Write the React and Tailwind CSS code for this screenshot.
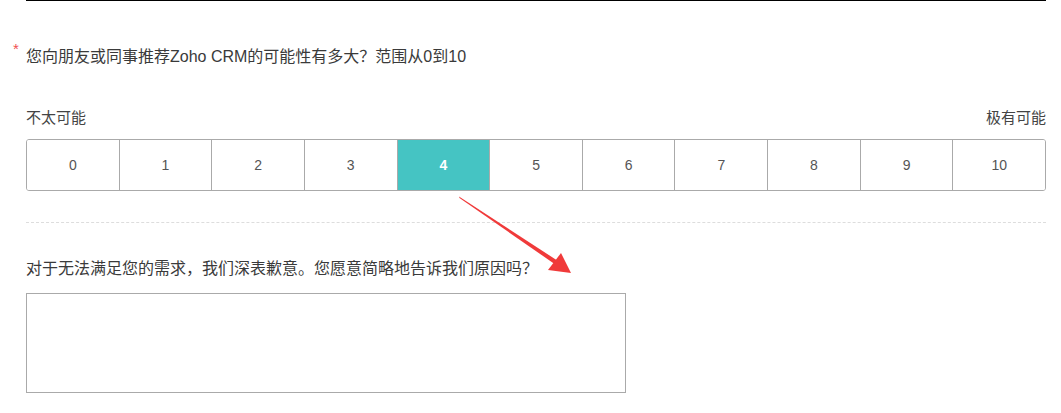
export default function App() {
  const nums = [0, 1, 2, 3, 4, 5, 6, 7, 8, 9, 10]
  const selected = 4
  const font = { fontFamily: '"Liberation Sans", Arial, "Noto Sans CJK SC", sans-serif' }

  return (
    <div className="relative h-[413px] w-[1061px] overflow-hidden bg-white text-[#3a3a3a]" style={font}>
      <div className="ml-[26px] w-[1020px]">
        <div className="h-px bg-black" />

        {/* question 1 */}
        <div className="relative mt-[46px] text-[16px] leading-[20px]">
          <span className="absolute -left-[13px] -top-[6px] text-[15px] leading-none text-[#f05050]">*</span>
          您向朋友或同事推荐Zoho CRM的可能性有多大？范围从0到10
        </div>

        <div className="mt-[42px] flex justify-between text-[15px] leading-[18px] text-[#444]">
          <span>不太可能</span>
          <span>极有可能</span>
        </div>

        <div className="mt-[12px] flex h-[52px] overflow-hidden rounded-[3px] border border-[#aaa]">
          {nums.map((n) => (
            <div
              key={n}
              className={
                'flex flex-1 items-center justify-center text-[14px] ' +
                (n === selected ? 'bg-[#45c4c3] font-bold text-white' : 'bg-white text-[#555]') +
                (n > 0 ? ' border-l border-[#aaa]' : '')
              }
            >
              {n}
            </div>
          ))}
        </div>

        <div className="mt-[31px] border-t border-dashed border-[#ddd]" />

        {/* question 2 */}
        <div className="mt-[36px] text-[16px] leading-[20px]">
          对于无法满足您的需求，我们深表歉意。您愿意简略地告诉我们原因吗？
        </div>

        <textarea className="mt-[14px] block h-[100px] w-[600px] resize-none border border-[#aaa] outline-none" />
      </div>

      {/* red annotation arrow */}
      <svg className="pointer-events-none absolute left-0 top-0" width="1061" height="413">
        <polygon points="459,196.5 459.5,198 556,265 558,261" fill="#f03a3a" />
        <polygon points="571,273 548,270 561,253" fill="#f03a3a" />
      </svg>
    </div>
  )
}
